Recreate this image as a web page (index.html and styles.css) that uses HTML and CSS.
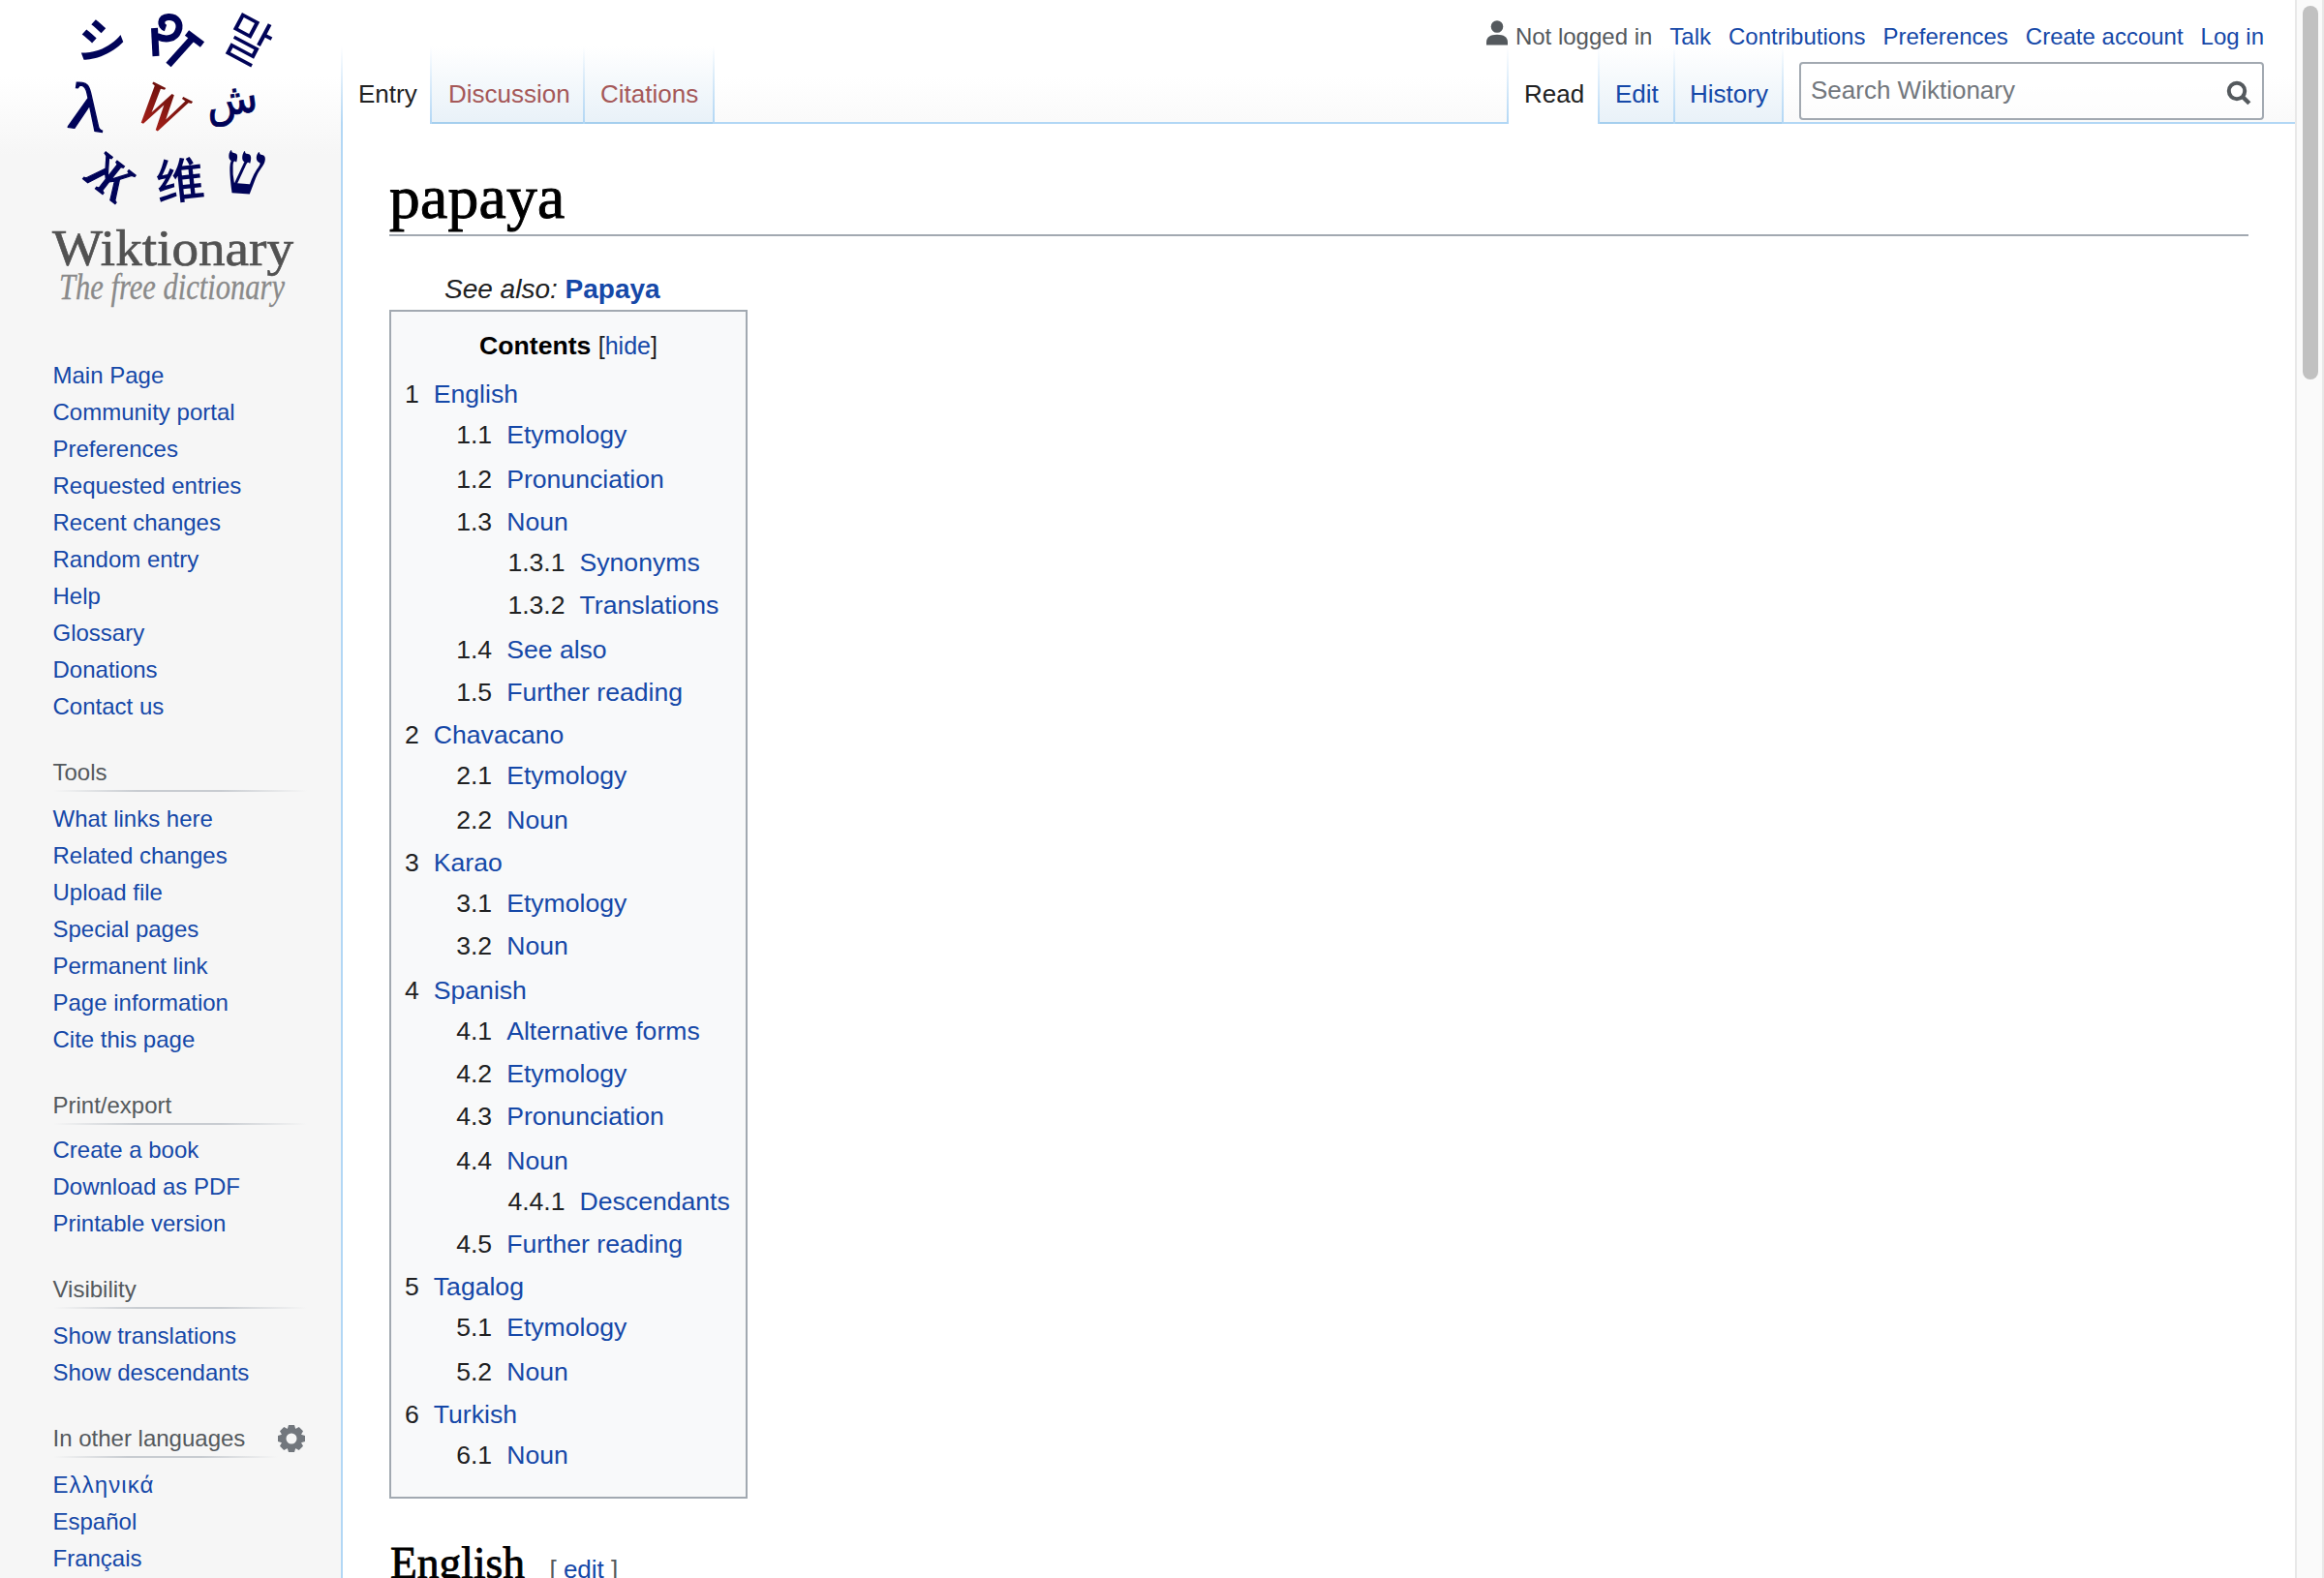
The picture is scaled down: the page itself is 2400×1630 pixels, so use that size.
FILE: index.html
```html
<!DOCTYPE html>
<html lang="en">
<head>
<meta charset="utf-8">
<title>papaya - Wiktionary</title>
<link rel="stylesheet" href="styles.css">
</head>
<body>
<div class="page">
  <aside class="sidebar">
    <a class="logo">
      <svg width="352" height="330" viewBox="0 0 352 330">
        <defs>
          <linearGradient id="red" x1="0" y1="0" x2="0" y2="1">
            <stop offset="0" stop-color="#5e0d0a"/>
            <stop offset="1" stop-color="#b3241c"/>
          </linearGradient>
        </defs>
        <g class="glyphs" text-anchor="middle">
          <text class="jp" font-size="51" transform="translate(105 44) rotate(9)" y="18">シ</text>
          <g class="mark">
            <path d="M171 29 C165 27 165 18 174 17.500 C183 17 187 25 184 32 C181 40 172 42 162 37.500"/>
            <path d="M159.500 29 L161 58"/>
            <path d="M174 67 L200 38"/>
            <path d="M193 34 L209 46"/>
          </g>
          <text class="kr" font-size="54" transform="translate(256 41) rotate(28) scale(.92 1)" y="20">말</text>
          <text class="lambda" font-size="68" transform="translate(90 112) rotate(8) scale(1.15 1)" y="22">λ</text>
          <text class="serif w" font-size="58" transform="translate(165 114) rotate(27) scale(.9 1.12)" y="17">W</text>
          <text class="dejavu" font-size="44" transform="translate(240 111) rotate(-8)" y="7">ش</text>
          <text class="zhe" font-size="66" transform="translate(113 184) rotate(38) scale(.92 1.2)" y="14.500">ж</text>
          <text class="sc" font-size="50" transform="translate(186 186) rotate(-6)" y="19">维</text>
          <text class="serif" font-size="60" transform="translate(253 179) rotate(4) scale(.95 1.25)" y="17">ש</text>
        </g>
        <text class="wordmark" x="54" y="274" textLength="249" lengthAdjust="spacingAndGlyphs">Wiktionary</text>
        <text class="tagline" x="61" y="309" textLength="233" lengthAdjust="spacingAndGlyphs">The free dictionary</text>
      </svg>
    </a>
    <nav class="portal first">
      <ul>
        <li><a>Main Page</a></li><li><a>Community portal</a></li><li><a>Preferences</a></li><li><a>Requested entries</a></li><li><a>Recent changes</a></li><li><a>Random entry</a></li><li><a>Help</a></li><li><a>Glossary</a></li><li><a>Donations</a></li><li><a>Contact us</a></li>
      </ul>
    </nav>
    <nav class="portal">
      <h3>Tools</h3>
      <ul>
        <li><a>What links here</a></li><li><a>Related changes</a></li><li><a>Upload file</a></li><li><a>Special pages</a></li><li><a>Permanent link</a></li><li><a>Page information</a></li><li><a>Cite this page</a></li>
      </ul>
    </nav>
    <nav class="portal tight">
      <h3>Print/export</h3>
      <ul>
        <li><a>Create a book</a></li><li><a>Download as PDF</a></li><li><a>Printable version</a></li>
      </ul>
    </nav>
    <nav class="portal">
      <h3>Visibility</h3>
      <ul>
        <li><a>Show translations</a></li><li><a>Show descendants</a></li>
      </ul>
    </nav>
    <nav class="portal languages">
      <div class="portal-head">
        <h3>In other languages</h3>
        <svg class="gear" width="28" height="28" viewBox="-14 -14 28 28">
          <g fill="#72777d">
            <path id="tooth" d="M-3 -14h6l1.500 5h-9z"/>
            <use href="#tooth" transform="rotate(45)"/><use href="#tooth" transform="rotate(90)"/><use href="#tooth" transform="rotate(135)"/><use href="#tooth" transform="rotate(180)"/><use href="#tooth" transform="rotate(225)"/><use href="#tooth" transform="rotate(270)"/><use href="#tooth" transform="rotate(315)"/>
          </g>
          <circle r="8.2" fill="none" stroke="#72777d" stroke-width="5.4"/>
        </svg>
      </div>
      <ul>
        <li><a class="greek">Ελληνικά</a></li><li><a>Español</a></li><li><a>Français</a></li>
      </ul>
    </nav>
  </aside>

  <div class="column">
    <header class="head">
      <ul class="personal">
        <li class="anon">
          <svg width="24" height="26" viewBox="0 0 24 26" fill="#54595d"><circle cx="12" cy="6.5" r="6.3"/><path d="M1 25.500v-3C1 17.500 5 14.800 12 14.800s11 2.700 11 7.700v3z"/></svg>
          <span>Not logged in</span>
        </li>
        <li><a>Talk</a></li><li><a>Contributions</a></li><li><a>Preferences</a></li><li><a>Create account</a></li><li><a>Log in</a></li>
      </ul>
      <div class="bar">
        <ul class="tabs">
          <li class="selected">Entry</li><li class="new discussion">Discussion</li><li class="new citations">Citations</li>
        </ul>
        <ul class="tabs views">
          <li class="selected read">Read</li><li class="edit">Edit</li><li class="history">History</li>
        </ul>
        <div class="search">
          <span>Search Wiktionary</span>
          <svg width="28" height="28" viewBox="0 0 28 28" fill="none" stroke="#54595d"><circle cx="12" cy="12" r="8.200" stroke-width="4"/><path d="M17.500 17.500L24.800 24.800" stroke-width="4.400"/></svg>
        </div>
      </div>
    </header>
    <main class="content">
      <h1>papaya</h1>
      <p class="see-also"><i>See also:</i> <b>Papaya</b></p>
      <section class="toc">
        <div class="toc-title"><b>Contents</b> <span>[<a>hide</a>]</span></div>
        <ul>
          <li><i>1</i><a>English</a></li>
          <li class="l2 child"><i>1.1</i><a>Etymology</a></li>
          <li class="l2 loose"><i>1.2</i><a>Pronunciation</a></li>
          <li class="l2"><i>1.3</i><a>Noun</a></li>
          <li class="l3 child"><i>1.3.1</i><a>Synonyms</a></li>
          <li class="l3"><i>1.3.2</i><a>Translations</a></li>
          <li class="l2 loose"><i>1.4</i><a>See also</a></li>
          <li class="l2"><i>1.5</i><a>Further reading</a></li>
          <li><i>2</i><a>Chavacano</a></li>
          <li class="l2 child"><i>2.1</i><a>Etymology</a></li>
          <li class="l2 loose"><i>2.2</i><a>Noun</a></li>
          <li><i>3</i><a>Karao</a></li>
          <li class="l2 child"><i>3.1</i><a>Etymology</a></li>
          <li class="l2"><i>3.2</i><a>Noun</a></li>
          <li class="loose"><i>4</i><a>Spanish</a></li>
          <li class="l2 child"><i>4.1</i><a>Alternative forms</a></li>
          <li class="l2"><i>4.2</i><a>Etymology</a></li>
          <li class="l2"><i>4.3</i><a>Pronunciation</a></li>
          <li class="l2 loose"><i>4.4</i><a>Noun</a></li>
          <li class="l3 child"><i>4.4.1</i><a>Descendants</a></li>
          <li class="l2"><i>4.5</i><a>Further reading</a></li>
          <li><i>5</i><a>Tagalog</a></li>
          <li class="l2 child"><i>5.1</i><a>Etymology</a></li>
          <li class="l2 loose"><i>5.2</i><a>Noun</a></li>
          <li><i>6</i><a>Turkish</a></li>
          <li class="l2 child"><i>6.1</i><a>Noun</a></li>
        </ul>
      </section>
      <h2>English <span>[ <a>edit</a> ]</span></h2>
    </main>
  </div>
  <div class="scrollbar"><div class="thumb"></div></div>
</div>
</body>
</html>
```
FILE: styles.css
```css
* { box-sizing: border-box; }

html, body { margin: 0; height: 100%; overflow: hidden; }

body {
  font-family: "Liberation Sans", Arial, sans-serif;
  color: #202122;
  background: #f6f6f6;
}

ul, h1, h2, h3, p { margin: 0; padding: 0; list-style: none; font-weight: normal; }

a { color: #1548a8; }

.page {
  display: flex;
  height: 1630px;
  overflow: hidden;
  background: linear-gradient(#fff 80px, #f6f6f6 160px);
}

/* Sidebar */
.sidebar { width: 352px; flex: none; font-size: 24px; line-height: 38px; }
.logo { display: block; height: 330px; }
.logo svg { display: block; }
.glyphs { fill: #000358; }
.mark path { fill: none; stroke: #000358; stroke-width: 7; }
.jp { font-family: "Noto Sans CJK JP", sans-serif; font-weight: bold; }
.kr { font-family: "Noto Sans CJK KR", sans-serif; }
.sc { font-family: "Noto Sans CJK SC", sans-serif; font-weight: 500; }
.serif { font-family: "Liberation Serif", serif; font-weight: bold; }
.lambda, .zhe { font-family: "Liberation Serif", serif; stroke: #000358; stroke-width: 1.2px; }
.dejavu { font-family: "DejaVu Sans", sans-serif; stroke: #000358; stroke-width: .8px; }
.w { fill: url(#red); font-style: italic; }
.wordmark { font: 53px "Liberation Serif", serif; fill: #525252; stroke: #525252; stroke-width: .7px; }
.tagline { font: italic 37px "Liberation Serif", serif; fill: #8a8a8a; stroke: #8a8a8a; stroke-width: .3px; }

.portal { padding: 30px 0 0 54.5px; }
.portal.first { padding-top: 39px; }
.portal h3 {
  width: 262px;
  height: 39px;
  margin-bottom: 9px;
  font-size: 24px;
  color: #54595d;
  background: linear-gradient(90deg, rgba(200,204,209,0), #c8ccd1 33%, #c8ccd1 66%, rgba(200,204,209,0)) left bottom / 100% 2px no-repeat;
}
.portal.tight h3 { margin-bottom: 7px; }
.portal-head { display: flex; }
.portal.languages h3 { width: 232px; }
.gear { margin-top: 5px; }
.greek { letter-spacing: 1.1px; }

/* Header */
.column { width: 2018px; flex: none; display: flex; flex-direction: column; }
.head { height: 126px; flex: none; }
.personal {
  position: relative;
  z-index: 1;
  display: flex;
  justify-content: flex-end;
  gap: 18px;
  height: 48px;
  padding: 19px 32px 0 0;
  font-size: 24px;
  line-height: 38px;
}
.personal li { height: 38px; }
.anon { display: flex; gap: 6px; color: #54595d; }
.anon svg { margin: 2px 1px 0 -1px; }

.bar { position: relative; display: flex; height: 80px; }
.tabs {
  display: flex;
  padding-left: 2px;
  height: 80px;
  font-size: 26px;
  background: linear-gradient(rgba(178,215,245,0), #b2d7f5) left top / 2px 80px no-repeat;
}
.tabs li {
  height: 80px;
  padding: 34px 0 0 16px;
  line-height: 30px;
  color: #1548a8;
  background:
    linear-gradient(rgba(178,215,245,0), #b2d7f5) right top / 2px 100% no-repeat,
    linear-gradient(#a5cfee, #a5cfee) left bottom / 100% 2px no-repeat,
    linear-gradient(#fff, #e8f1f8);
}
.tabs .selected {
  width: 92px;
  color: #202122;
  background: linear-gradient(rgba(178,215,245,0), #b2d7f5) right top / 2px 100% no-repeat, #fff;
}
.tabs .new { color: #a55858; }
.tabs .discussion { width: 158px; padding-left: 17px; }
.tabs .citations { width: 134px; }
.tabs .read { width: 94px; }
.tabs .edit { width: 78px; }
.tabs .history { width: 112px; padding-left: 15px; }
.views { margin-left: auto; }
.search {
  display: flex;
  justify-content: space-between;
  width: 480px;
  height: 60px;
  margin: 16px 32px 0 16px;
  padding: 12px 10px 0 10px;
  border: 2px solid #a2a9b1;
  border-radius: 4px;
  background: rgba(255,255,255,.5);
  font-size: 26px;
  line-height: 30px;
  color: #72777d;
}
.search svg { margin-top: 4px; }

/* Article */
.content {
  flex: 1;
  padding: 40px 48px 0;
  border: solid #b2d7f5;
  border-width: 2px 0 0 2px;
  background: #fff;
  font-size: 28px;
}
h1 {
  height: 76px;
  border-bottom: 2px solid #a2a9b1;
  font: 63.5px/72px "Liberation Serif", serif;
  letter-spacing: .3px;
  color: #000;
  -webkit-text-stroke: 1px #000;
}
.see-also { height: 76px; padding: 36px 0 0 57px; line-height: 38px; }
.see-also b { color: #1548a8; }
.toc {
  width: 370px;
  height: 1228px;
  padding: 14px;
  border: 2px solid #a2a9b1;
  background: #f8f9fa;
  font-size: 26.6px;
}
.toc-title { height: 50px; text-align: center; line-height: 42px; }
.toc-title b { color: #000; }
.toc-title span { font-size: 25px; }
.toc li { height: 44px; line-height: 42px; white-space: nowrap; }
.toc i { font-style: normal; padding-right: 15px; }
.toc .l2 { padding-left: 53.2px; }
.toc .l3 { padding-left: 106.4px; }
.toc .child { margin-top: -2px; }
.toc .loose { margin-top: 2px; }
h2 {
  margin: 40px 0 0 1px;
  font: 45.5px/54px "Liberation Serif", serif;
  color: #000;
  -webkit-text-stroke: .8px #000;
}
h2 span {
  margin-left: 14px;
  font: 26px "Liberation Sans", sans-serif;
  color: #54595d;
  -webkit-text-stroke: 0;
}

/* Window scrollbar */
.scrollbar {
  width: 30px;
  flex: none;
  padding: 6px 4px 0 6px;
  border: solid #e8e8e8;
  border-width: 0 2px;
  background: #fafafa;
}
.thumb { width: 16px; height: 386px; border-radius: 8px; background: #c1c1c1; }
```
